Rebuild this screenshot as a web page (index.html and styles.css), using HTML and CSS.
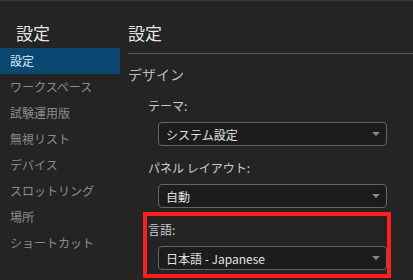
FILE: index.html
```html
<!DOCTYPE html>
<html lang="ja">
<head>
    <meta charset="UTF-8">
    <meta name="viewport" content="width=device-width, initial-scale=1.0">
    <title>設定</title>
    <link rel="stylesheet" href="styles.css">
</head>
<body>
    <div class="window">
        <div class="sidebar">
            <h2 class="sidebar-title">設定</h2>
            <div class="nav-item active">設定</div>
            <div class="nav-item">ワークスペース</div>
            <div class="nav-item">試験運用版</div>
            <div class="nav-item">無視リスト</div>
            <div class="nav-item">デバイス</div>
            <div class="nav-item">スロットリング</div>
            <div class="nav-item">場所</div>
            <div class="nav-item">ショートカット</div>
        </div>

        <div class="content">
            <h2 class="content-title">設定</h2>
            <div class="section-title">デザイン</div>

            <div class="fields">
                <div class="field">
                    <div class="label">テーマ:</div>
                    <div class="select">
                        <span>システム設定</span>
                        <span class="arrow"></span>
                    </div>
                </div>

                <div class="field">
                    <div class="label">パネル レイアウト:</div>
                    <div class="select">
                        <span>自動</span>
                        <span class="arrow"></span>
                    </div>
                </div>

                <div class="field highlight">
                    <div class="label">言語:</div>
                    <div class="select">
                        <span>日本語 - Japanese</span>
                        <span class="arrow"></span>
                    </div>
                </div>
            </div>
        </div>
    </div>
</body>
</html>
```

FILE: styles.css
```css
body {
    font-family: "Noto Sans CJK JP", "Noto Sans", sans-serif;
    margin: 0;
    padding: 0;
    background-color: #242424;
    color: #cccccc;
    height: 280px;
    overflow: hidden;
}

.window {
    display: flex;
    border-top: 1px solid #3a3a3a;
    height: 279px;
}

.sidebar {
    width: 120px;
    flex-shrink: 0;
}

.sidebar-title {
    margin: 0;
    height: 47px;
    padding-left: 16px;
    font-size: 17px;
    font-weight: 400;
    line-height: 63px;
    color: #e6e6e6;
}

.nav-item {
    height: 26px;
    line-height: 26px;
    padding-left: 10px;
    font-size: 12px;
    color: #8c8c8c;
    white-space: nowrap;
}

.nav-item.active {
    background-color: #0a4871;
    color: #d8e8f6;
}

.content {
    flex: 1;
    padding-left: 8px;
}

.content-title {
    margin: 0;
    height: 52px;
    font-size: 17px;
    font-weight: 400;
    line-height: 64px;
    color: #e6e6e6;
    border-bottom: 1px solid #555555;
}

.section-title {
    margin-top: 10px;
    font-size: 14px;
    line-height: 20px;
    color: #bdbdbd;
}

.fields {
    width: 239px;
    margin-left: 20px;
    margin-top: 13px;
}

.field {
    margin-bottom: 13px;
}

.label {
    font-size: 12px;
    line-height: 18px;
    color: #cccccc;
    margin-bottom: 7px;
}

.select {
    display: flex;
    justify-content: space-between;
    align-items: center;
    box-sizing: border-box;
    height: 24px;
    margin-left: 10px;
    padding: 0 6px 0 7px;
    background-color: #1c1c1c;
    border: 1px solid #666666;
    border-radius: 4px;
    font-size: 12px;
    color: #e2e2e2;
}

.arrow {
    width: 0;
    height: 0;
    border-left: 4px solid transparent;
    border-right: 4px solid transparent;
    border-top: 4px solid #8a8a8a;
}

.field.highlight {
    margin: -9px -4px 0 -5px;
    padding: 5px 0 4px 1px;
    border: 4px solid #ff1f1f;
}
```
